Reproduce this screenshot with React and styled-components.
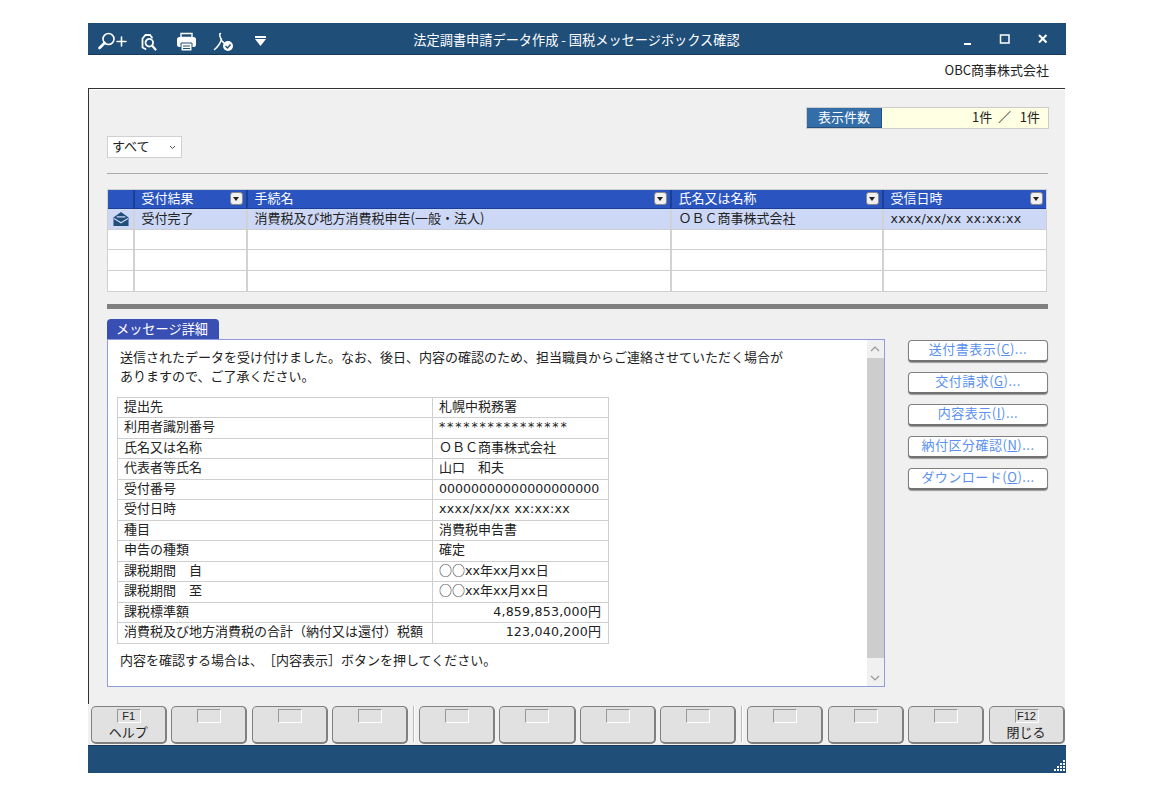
import React from 'react';
import styled, { createGlobalStyle } from 'styled-components';

const Global = createGlobalStyle`
  html, body { margin: 0; padding: 0; background: #fff; }
  body { font-family: "Noto Sans CJK JP", "Liberation Sans", sans-serif; font-size: 13px; color: #222; text-spacing-trim: space-all; text-autospace: no-autospace; }
`;
const Stage = styled.div`position: relative; width: 1156px; height: 796px; overflow: hidden; background: #fff;`;
const Win = styled.div`position: absolute; left: 88px; top: 23px; width: 978px; height: 750px; display: flex; flex-direction: column;`;
const TitleBar = styled.div`position: relative; height: 32px; background: #1f4e79; color: #fff; display: flex; align-items: center; justify-content: center; box-sizing: border-box; border-bottom: 1px solid #16395a;`;
const TitleText = styled.div`font-size: 13.200px; margin-top: 3px; margin-left: -1px;`;
const Tool = styled.svg`position: absolute; top: ${p => p.$t || 5}px; left: ${p => p.$l}px;`;
const Company = styled.div`height: 33px; box-sizing: border-box; padding: 4px 17px 0 0; text-align: right; font-size: 13px; line-height: 22px; color: #222; background: #fff;`;
const Body = styled.div`position: relative; height: 617px; background: #f0f0f0; border-top: 1px solid #333; border-left: 1px solid #333; margin-right: 1px; box-shadow: inset 0 1px 0 #fff;`;
const Counter = styled.div`position: absolute; left: 717px; top: 18px; width: 243px; height: 22px; box-sizing: border-box; display: flex; border: 1px solid #ccc;`;
const CounterLabel = styled.div`width: 74px; background: #336ea8; color: #fff; text-align: center; font-size: 13px; line-height: 18px; border-right: 1px solid #244f7c; border-bottom: 1px solid #264f7a;`;
const CounterValue = styled.div`flex: 1; background: #ffffe3; text-align: right; padding-right: 8px; line-height: 18px; font-size: 13px; white-space: pre;`;
const Select = styled.div`position: absolute; left: 18px; top: 47px; width: 75px; height: 22px; box-sizing: border-box; border: 1px solid #d0d0d0; background: #fff; padding-left: 4px; line-height: 17px; font-size: 13px;`;
const Chevron = styled.svg`position: absolute; right: 5px; top: 8px;`;
const Rule = styled.div`position: absolute; left: 18px; top: 84px; width: 941px; height: 1px; background: #aaa;`;
const Grid = styled.div`position: absolute; left: 18px; top: 100px; width: 940px; box-sizing: border-box; border: 1px solid #cfcfcf; background: #fff;`;
const Row = styled.div`display: grid; grid-template-columns: 27px 113px 424px 212px 1fr; height: ${p => p.$h || 20.5}px; box-sizing: border-box; border-bottom: 1px solid #cfcfcf; background: ${p => p.$selected ? '#cdd8f6' : '#fff'}; &:last-child { border-bottom: 0; }`;
const HeadRow = styled(Row)`background: #2a55c0; height: 19px; border-bottom: 1px solid #1c3f96;`;
const Cell = styled.div`border-right: 2px solid #d2d2d2; padding-left: 6.500px; line-height: 17px; font-size: 13px; white-space: nowrap; position: relative; &:last-child { border-right: 0; }`;
const HeadCell = styled(Cell)`color: #fff; border-right: 2px solid #1c3f96; line-height: 16px; &:last-child { border-right: 0; }`;
const Sort = styled.span`position: absolute; right: 3px; top: 2px; width: 13px; height: 13px; box-sizing: border-box; border: 1px solid #8a8a8a; border-radius: 3px; background: #f0f0f0; display: block; &::after { content: ""; position: absolute; left: 2px; top: 4px; border-left: 3.500px solid transparent; border-right: 3.500px solid transparent; border-top: 4px solid #222; }`;
const Splitter = styled.div`position: absolute; left: 18px; top: 215px; width: 941px; height: 5px; background: #808080;`;
const Tab = styled.div`position: absolute; left: 18px; top: 230px; width: 112px; height: 21px; box-sizing: border-box; padding-right: 2px; background: #3a4fb4; color: #fff; border-radius: 4px 4px 0 0; text-align: center; font-size: 13.200px; line-height: 19px;`;
const Panel = styled.div`position: absolute; left: 18px; top: 250px; width: 778px; height: 348px; box-sizing: border-box; border: 1px solid #8f9bdc; background: #fff;`;
const Message = styled.div`position: absolute; left: 12px; top: 7px; font-size: 13px; line-height: 19px; white-space: pre;`;
const Foot = styled.div`position: absolute; left: 12px; top: 310px; font-size: 13px; line-height: 19px; white-space: pre;`;
const InfoTable = styled.div`position: absolute; left: 9px; top: 57px; width: 492px; box-sizing: border-box; border: 1px solid #cfcfcf; border-bottom: 0;`;
const InfoRow = styled.div`display: grid; grid-template-columns: 315px 1fr; height: 20.500px; box-sizing: border-box; border-bottom: 1.500px solid #cfcfcf;`;
const InfoCell = styled.div`padding: 0 ${p => p.$right ? 7 : 0}px 0 6px; text-align: ${p => p.$right ? 'right' : 'left'}; line-height: 15px; font-size: 13px; white-space: nowrap; border-right: ${p => p.$first ? '1.500px solid #cfcfcf' : '0'};`;
const Lat = styled.span`font-family: "DejaVu Sans", sans-serif; font-size: 12.600px; letter-spacing: ${p => p.$ls || 0}px;`;
const Scroll = styled.div`position: absolute; right: 0; top: 0; width: 17px; height: 346px; background: #f0f0f0;`;
const Thumb = styled.div`position: absolute; left: 0; top: 18px; width: 17px; height: 300px; background: #cdcdcd;`;
const Arrow = styled.svg`position: absolute; left: 3px; top: ${p => p.$t}px;`;
const Side = styled.div`position: absolute; left: 819px; top: 251px; width: 140px; display: flex; flex-direction: column; gap: 10px;`;
const SideBtn = styled.div`height: 22px; box-sizing: border-box; border: 1px solid #808080; border-bottom: 2px solid #707070; box-shadow: 0 1px 1px #999; border-radius: 4px; background: #fff; color: #5a90f0; text-align: center; font-size: 13px; letter-spacing: 0.500px; line-height: 16px;`;
const U = styled.span`text-decoration: underline;`;
const FnBar = styled.div`height: 41px; display: flex; padding-left: 2.600px; gap: 4.300px; box-sizing: border-box; padding-top: 2px; background: #f0f0f0; margin-right: 1px;`;
const FnBtn = styled.div`position: relative; width: 76.200px; height: 38px; box-sizing: border-box; border: 1px solid #808080; border-right: 2px solid #808080; border-bottom: 2px solid #808080; border-radius: 5px; background: #e1e1e1; flex: none;`;
const Key = styled.div`position: absolute; left: 25px; top: 2px; width: 24px; height: 14px; box-sizing: border-box; border-top: 1px solid #999; border-left: 1px solid #999; border-right: 1px solid #fff; border-bottom: 1px solid #fff; font-size: 11px; font-family: "Liberation Sans", sans-serif; line-height: 12px; text-align: center; color: #222;`;
const FnLabel = styled.div`position: absolute; left: 0; right: 0; top: 15px; text-align: center; font-size: 13px; line-height: 19px; color: #222;`;
const Sep = styled.div`width: 1px; height: 36px; background: #bbb; border-right: 1px solid #fff; flex: none;`;
const Status = styled.div`position: relative; height: 28px; background: #1f4e79; border-top: 1px solid #16395a; box-sizing: border-box;`;
const Grip = styled.svg`position: absolute; right: 0; bottom: 1px;`;

const rows = [
  ['提出先', '札幌中税務署'],
  ['利用者識別番号', <Lat $ls={1.8}>****************</Lat>],
  ['氏名又は名称', 'ＯＢＣ商事株式会社'],
  ['代表者等氏名', '山口　和夫'],
  ['受付番号', <Lat>00000000000000000000</Lat>],
  ['受付日時', <Lat $ls={0.3}>xxxx/xx/xx xx:xx:xx</Lat>],
  ['種目', '消費税申告書'],
  ['申告の種類', '確定'],
  ['課税期間　自', <>○○<Lat>xx</Lat>年<Lat>xx</Lat>月<Lat>xx</Lat>日</>],
  ['課税期間　至', <>○○<Lat>xx</Lat>年<Lat>xx</Lat>月<Lat>xx</Lat>日</>],
  ['課税標準額', <><Lat $ls={0.2}>4,859,853,000</Lat>円</>, true],
  ['消費税及び地方消費税の合計（納付又は還付）税額', <><Lat $ls={0.2}>123,040,200</Lat>円</>, true],
];
const fn = [['F1', 'ヘルプ'], [], [], [], 'sep', [], [], [], [], 'sep', [], [], [], ['F12', '閉じる']];

export default function App() {
  return (
    <Stage>
      <Global />
      <Win>
        <TitleBar>
          <Tool $l={9} $t={8} width="30" height="21" viewBox="0 0 30 21" fill="none" stroke="#fff" strokeWidth="1.600" strokeLinecap="round">
            <circle cx="11.500" cy="8" r="5.500" /><path d="M7.500 12 L2.500 17" strokeWidth="2.600" /><path d="M20 10.500h9M24.500 6v9" />
          </Tool>
          <Tool $l={52} $t={9} width="17" height="21" viewBox="0 0 17 21" fill="none" stroke="#fff" strokeWidth="1.800" strokeLinecap="round">
            <path d="M10 3H5.500L2.500 6.500V15.500L5.500 17M10 3L12 5.500" /><circle cx="9.300" cy="10.700" r="3.800" /><path d="M12 13.500 L15.500 17.500" strokeWidth="2.200" />
          </Tool>
          <Tool $l={88} $t={9} width="21" height="20" viewBox="0 0 21 20">
            <path d="M5 1.500h11v4H5z" fill="none" stroke="#fff" strokeWidth="1.400" /><rect x="1" y="5" width="19" height="10" rx="2.500" fill="#fff" /><path d="M5 11h11v8H5z" fill="#fff" stroke="#1f4e79" strokeWidth="1" /><path d="M7 14h7M7 16.500h7" stroke="#1f4e79" strokeWidth="1" />
          </Tool>
          <Tool $l={125} $t={7} width="22" height="22" viewBox="0 0 22 22" fill="none">
            <path d="M7.500 3.500C6 3.500 7 8 9 11C10.500 13 12 14 14 14.500M8.500 9C7.500 13 4.500 17 1.500 19.500" stroke="#fff" strokeWidth="1.500" strokeLinecap="round" />
            <circle cx="15" cy="16" r="5" fill="#fff" /><path d="M12.500 16l2 2 3-3.500" stroke="#1f4e79" strokeWidth="1.400" fill="none" />
          </Tool>
          <Tool $l={166} $t={12} width="13" height="12" viewBox="0 0 13 12">
            <path d="M1 1h11v2H1z M1 4h11L6.500 11z" fill="#fff" />
          </Tool>
          <TitleText>法定調書申請データ作成 - 国税メッセージボックス確認</TitleText>
          <Tool $l={874} $t={9} width="12" height="14" viewBox="0 0 12 14"><path d="M2 12h7" stroke="#fff" strokeWidth="2" /></Tool>
          <Tool $l={911} $t={9} width="12" height="14" viewBox="0 0 12 14" fill="none"><rect x="1.500" y="3" width="8.500" height="8" stroke="#fff" strokeWidth="1.500" /></Tool>
          <Tool $l={949} $t={9} width="12" height="14" viewBox="0 0 12 14"><path d="M2 3l7.500 7.500M9.500 3L2 10.500" stroke="#fff" strokeWidth="2" /></Tool>
        </TitleBar>
        <Company>OBC商事株式会社</Company>
        <Body>
          <Counter>
            <CounterLabel>表示件数</CounterLabel>
            <CounterValue>{'1件  ／   1件'}</CounterValue>
          </Counter>
          <Select>
            すべて
            <Chevron width="7" height="5" viewBox="0 0 7 5" fill="none"><path d="M1 1l2.500 2.500L6 1" stroke="#555" strokeWidth="1" /></Chevron>
          </Select>
          <Rule />
          <Grid>
            <HeadRow>
              <HeadCell />
              <HeadCell>受付結果<Sort /></HeadCell>
              <HeadCell>手続名<Sort /></HeadCell>
              <HeadCell>氏名又は名称<Sort /></HeadCell>
              <HeadCell>受信日時<Sort /></HeadCell>
            </HeadRow>
            <Row $selected $h={21}>
              <Cell>
                <Tool $l={4} $t={3} width="18" height="14" viewBox="0 0 16 13">
                  <path d="M8 0L1 5v8h14V5z" fill="#1f4e79" /><path d="M1.500 6L8 10l6.500-4M4 4.500h8" fill="none" stroke="#cdd8f6" strokeWidth="1" />
                </Tool>
              </Cell>
              <Cell>受付完了</Cell>
              <Cell>消費税及び地方消費税申告(一般・法人)</Cell>
              <Cell>ＯＢＣ商事株式会社</Cell>
              <Cell><Lat $ls={0.3}>xxxx/xx/xx xx:xx:xx</Lat></Cell>
            </Row>
            {[0, 1, 2].map(i => (
              <Row key={i}><Cell /><Cell /><Cell /><Cell /><Cell /></Row>
            ))}
          </Grid>
          <Splitter />
          <Tab>メッセージ詳細</Tab>
          <Panel>
            <Message>{'送信されたデータを受け付けました。なお、後日、内容の確認のため、担当職員からご連絡させていただく場合が\nありますので、ご了承ください。'}</Message>
            <InfoTable>
              {rows.map(([a, b, r]) => (
                <InfoRow key={a}>
                  <InfoCell $first>{a}</InfoCell>
                  <InfoCell $right={r}>{b}</InfoCell>
                </InfoRow>
              ))}
            </InfoTable>
            <Foot>内容を確認する場合は、［内容表示］ボタンを押してください。</Foot>
            <Scroll>
              <Arrow $t={6} width="10" height="7" viewBox="0 0 10 7" fill="none"><path d="M1 5l4-4 4 4" stroke="#999" strokeWidth="1.200" /></Arrow>
              <Thumb />
              <Arrow $t={335} width="10" height="7" viewBox="0 0 10 7" fill="none"><path d="M1 1l4 4 4-4" stroke="#999" strokeWidth="1.200" /></Arrow>
            </Scroll>
          </Panel>
          <Side>
            <SideBtn>送付書表示(<U>C</U>)...</SideBtn>
            <SideBtn>交付請求(<U>G</U>)...</SideBtn>
            <SideBtn>内容表示(<U>I</U>)...</SideBtn>
            <SideBtn>納付区分確認(<U>N</U>)...</SideBtn>
            <SideBtn>ダウンロード(<U>O</U>)...</SideBtn>
          </Side>
        </Body>
        <FnBar>
          {fn.map((f, i) => f === 'sep' ? <Sep key={i} /> : (
            <FnBtn key={i}>
              <Key>{f[0]}</Key>
              {f[1] && <FnLabel>{f[1]}</FnLabel>}
            </FnBtn>
          ))}
        </FnBar>
        <Status>
          <Grip width="12" height="12" viewBox="0 0 12 12" fill="#fff">
            <rect x="9" y="0" width="2" height="2" /><rect x="6" y="3" width="2" height="2" /><rect x="9" y="3" width="2" height="2" /><rect x="3" y="6" width="2" height="2" /><rect x="6" y="6" width="2" height="2" /><rect x="9" y="6" width="2" height="2" /><rect x="0" y="9" width="2" height="2" /><rect x="3" y="9" width="2" height="2" /><rect x="6" y="9" width="2" height="2" /><rect x="9" y="9" width="2" height="2" />
          </Grip>
        </Status>
      </Win>
    </Stage>
  );
}
